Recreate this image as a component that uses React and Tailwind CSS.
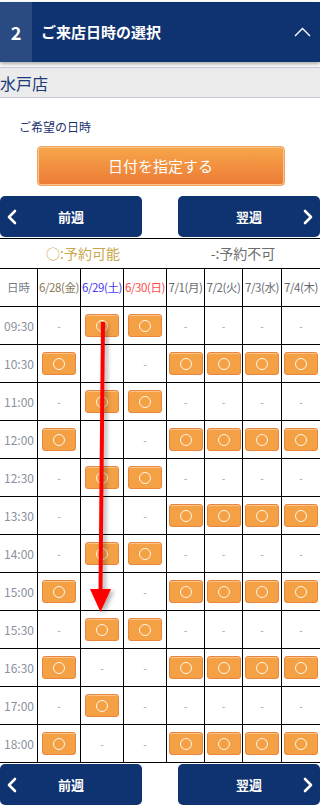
import React from "react";

const F = { fontFamily: '"Noto Sans CJK JP", "Noto Sans", sans-serif' };

const dates = [
  { t: "6/28(金)", c: "text-[#8a7a5a]" },
  { t: "6/29(土)", c: "text-[#4a3cf0]" },
  { t: "6/30(日)", c: "text-[#ff4a4a]" },
  { t: "7/1(月)", c: "text-[#666a70]" },
  { t: "7/2(火)", c: "text-[#666a70]" },
  { t: "7/3(水)", c: "text-[#666a70]" },
  { t: "7/4(木)", c: "text-[#666a70]" },
];

const rows = [
  ["09:30", "0110000"],
  ["10:30", "1001111"],
  ["11:00", "0110000"],
  ["12:00", "1001111"],
  ["12:30", "0110000"],
  ["13:30", "0001111"],
  ["14:00", "0110000"],
  ["15:00", "1001111"],
  ["15:30", "0110000"],
  ["16:30", "1001111"],
  ["17:00", "0100000"],
  ["18:00", "1001111"],
];

function Slot() {
  return (
    <div className="w-[34px] h-[23px] rounded-[3px] bg-[#f4a045] border border-[#e9853c] shadow-[inset_0_1px_0_#f8c58a] flex items-center justify-center">
      <div className="w-[12px] h-[12px] rounded-full border border-[#fff8e8]" />
    </div>
  );
}

function NavButtons() {
  return (
    <div className="flex justify-between h-[41px]">
      <div className="w-[142px] h-full bg-[#0f3270] rounded-[5px] flex items-center relative text-white">
        <svg className="absolute left-[6px] top-[13px]" width="12" height="16" viewBox="0 0 12 16">
          <path d="M9 2 L3 8 L9 14" fill="none" stroke="white" strokeWidth="2.6" strokeLinecap="round" strokeLinejoin="round" />
        </svg>
        <span className="w-full text-center text-[13px] font-bold">前週</span>
      </div>
      <div className="w-[142px] h-full bg-[#0f3270] rounded-[5px] flex items-center relative text-white">
        <span className="w-full text-center text-[13px] font-bold">翌週</span>
        <svg className="absolute right-[6px] top-[13px]" width="12" height="16" viewBox="0 0 12 16">
          <path d="M3 2 L9 8 L3 14" fill="none" stroke="white" strokeWidth="2.6" strokeLinecap="round" strokeLinejoin="round" />
        </svg>
      </div>
    </div>
  );
}

const gridCols = "grid grid-cols-[37px_43px_43px_43px_38px_38px_39px_39px]";

export default function App() {
  return (
    <div style={F} className="w-[320px] h-[805px] bg-white relative overflow-hidden">
      <div className="pt-[2px]">
        <div className="h-[60px] bg-[#0f3270] flex items-stretch shadow-[0_2px_4px_rgba(0,0,0,0.35)] relative z-10">
          <div className="w-[32px] bg-[#2a4b82] flex items-center justify-center text-white text-[18px] font-bold">2</div>
          <div className="flex-1 flex items-center pl-[9px] text-white text-[15px] font-bold">ご来店日時の選択</div>
          <svg className="self-center mr-[9px]" width="17" height="10" viewBox="0 0 17 10">
            <path d="M1 9 L8.5 1.5 L16 9" fill="none" stroke="white" strokeWidth="1.4" />
          </svg>
        </div>
      </div>
      <div className="h-[5px]" />
      <div className="h-[31px] bg-[#ebebeb] border-y border-[#c6cbd6] flex items-center text-[16px] text-[#1a3a7a]">水戸店</div>
      <div className="pt-[20px] pl-[19px] text-[12px] text-[#1a3070] leading-[18px]">ご希望の日時</div>
      <div className="pt-[10px] flex justify-center">
        <div className="ml-[1px] w-[248px] h-[40px] rounded-[4px] bg-gradient-to-b from-[#f6a64a] to-[#ec7a36] border border-[#f1a261] shadow-[inset_0_0_0_1px_#f8c590] flex items-center justify-center text-white text-[15px]">
          日付を指定する
        </div>
      </div>
      <div className="pt-[10px]">
        <NavButtons />
      </div>
      <div className="mt-[1px] border-t border-black">
        <div className="h-[29px] flex items-center text-[14px]">
          <div className="w-[166px] text-center text-[#c9a84c]">○:予約可能</div>
          <div className="flex-1 text-center text-[#6d6d6d]">-:予約不可</div>
        </div>
        <div className={`${gridCols} border-t border-black h-[38px] text-[11.5px]`}>
          <div className="flex items-center justify-center text-[#777d88]">日時</div>
          {dates.map((d) => (
            <div key={d.t} className={`border-l border-black flex items-center justify-center whitespace-nowrap tracking-[-0.4px] ${d.c}`}>
              {d.t}
            </div>
          ))}
        </div>
        {rows.map(([time, pat]) => (
          <div key={time} className={`${gridCols} border-t border-black h-[38px]`}>
            <div className="flex items-center justify-end pr-[3px] text-[12px] text-[#8a91a0]">{time}</div>
            {pat.split("").map((p, i) => (
              <div key={i} className="border-l border-black flex items-center justify-center">
                {p === "1" ? <Slot /> : <span className="text-[10px] text-[#9a9cb0]">-</span>}
              </div>
            ))}
          </div>
        ))}
        <div className="border-t border-black" />
      </div>
      <div className="pt-[1px]">
        <NavButtons />
      </div>
      <svg className="absolute left-0 top-0 pointer-events-none" width="320" height="805" viewBox="0 0 320 805">
        <defs>
          <filter id="sh" x="-50%" y="-10%" width="200%" height="120%">
            <feDropShadow dx="3" dy="2" stdDeviation="2" floodColor="#000" floodOpacity="0.3" />
          </filter>
        </defs>
        <g filter="url(#sh)">
          <polygon points="101,322 105,322 102.5,592 98.5,592" fill="#ff0000" />
          <polygon points="90,589 111,589 100.5,612" fill="#ff0000" />
        </g>
      </svg>
    </div>
  );
}
